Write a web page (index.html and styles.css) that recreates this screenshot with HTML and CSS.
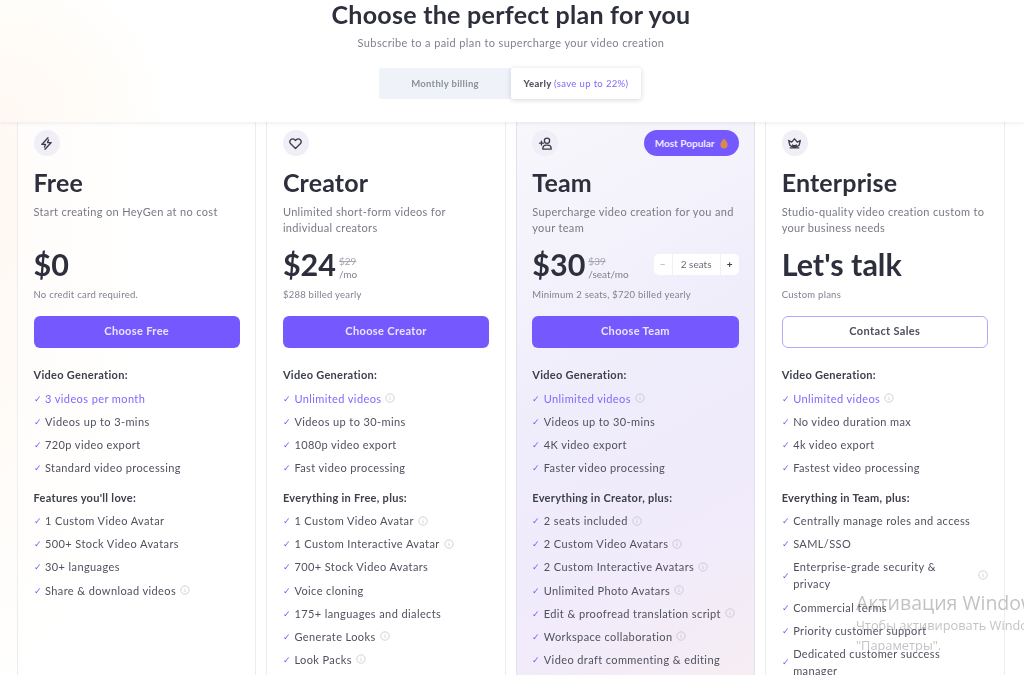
FILE: index.html
```html
<!DOCTYPE html>
<html lang="en">
<head>
<meta charset="utf-8">
<title>Choose the perfect plan</title>
<link rel="stylesheet" href="styles.css">
</head>
<body>
<svg class="defs" aria-hidden="true"><symbol id="info" viewBox="0 0 12 12"><circle cx="6" cy="6" r="5" fill="none" stroke="currentColor" stroke-width=".8"/><path d="M6 5.4v3M6 3.4v.9" fill="none" stroke="currentColor" stroke-width=".8"/></symbol></svg>
<header class="top">
  <h1 class="headline">Choose the perfect plan for you</h1>
  <p class="sub">Subscribe to a paid plan to supercharge your video creation</p>
  <div class="toggle">
    <div class="opt">Monthly billing</div>
    <div class="opt active"><b>Yearly</b>&nbsp;<span class="save">(save up to 22%)</span></div>
  </div>
</header>
<main class="plans">
  <section class="card">
    <div class="head"><span class="ico"><svg viewBox="0 0 16 16"><path d="M9.6 1.8 3 9h4l-1.2 2.8M6.4 14.2 13 7H9l1.2-2.8" /></svg></span></div>
    <h2 class="name">Free</h2>
    <p class="desc">Start creating on HeyGen at no cost</p>
    <div class="price"><span class="amount">$0</span></div>
    <p class="note">No credit card required.</p>
    <a class="btn">Choose Free</a>
    <h3 class="group">Video Generation:</h3>
    <ul class="list">
      <li class="hl"><i>✓</i><span>3 videos per month</span></li>
      <li><i>✓</i><span>Videos up to 3-mins</span></li>
      <li><i>✓</i><span>720p video export</span></li>
      <li><i>✓</i><span>Standard video processing</span></li>
    </ul>
    <h3 class="group next">Features you'll love:</h3>
    <ul class="list">
      <li><i>✓</i><span>1 Custom Video Avatar</span></li>
      <li><i>✓</i><span>500+ Stock Video Avatars</span></li>
      <li><i>✓</i><span>30+ languages</span></li>
      <li><i>✓</i><span>Share &amp; download videos</span><svg class="inf"><use href="#info"/></svg></li>
    </ul>
  </section>

  <section class="card">
    <div class="head"><span class="ico"><svg viewBox="0 0 16 16"><path d="M8 13.4 2.9 8.3a3.1 3.1 0 0 1 0-4.3 3 3 0 0 1 4.3 0l.8.8.8-.8a3 3 0 0 1 4.3 0 3.1 3.1 0 0 1 0 4.3z"/></svg></span></div>
    <h2 class="name">Creator</h2>
    <p class="desc">Unlimited short-form videos for individual creators</p>
    <div class="price"><span class="amount">$24</span><span class="per"><s>$29</s><span>/mo</span></span></div>
    <p class="note">$288 billed yearly</p>
    <a class="btn">Choose Creator</a>
    <h3 class="group">Video Generation:</h3>
    <ul class="list">
      <li class="hl"><i>✓</i><span>Unlimited videos</span><svg class="inf"><use href="#info"/></svg></li>
      <li><i>✓</i><span>Videos up to 30-mins</span></li>
      <li><i>✓</i><span>1080p video export</span></li>
      <li><i>✓</i><span>Fast video processing</span></li>
    </ul>
    <h3 class="group next">Everything in Free, plus:</h3>
    <ul class="list">
      <li><i>✓</i><span>1 Custom Video Avatar</span><svg class="inf"><use href="#info"/></svg></li>
      <li><i>✓</i><span>1 Custom Interactive Avatar</span><svg class="inf"><use href="#info"/></svg></li>
      <li><i>✓</i><span>700+ Stock Video Avatars</span></li>
      <li><i>✓</i><span>Voice cloning</span></li>
      <li><i>✓</i><span>175+ languages and dialects</span></li>
      <li><i>✓</i><span>Generate Looks</span><svg class="inf"><use href="#info"/></svg></li>
      <li><i>✓</i><span>Look Packs</span><svg class="inf"><use href="#info"/></svg></li>
    </ul>
  </section>

  <section class="card team">
    <div class="head">
      <span class="ico"><svg viewBox="0 0 16 16"><circle cx="9.6" cy="5" r="2.8"/><path d="M5.2 14v-1a3.4 3.4 0 0 1 3.4-3.2h2a3.4 3.4 0 0 1 3.4 3.2v1zM1.6 7.6h4.2M3.7 5.5v4.2"/></svg></span>
      <span class="badge">Most Popular <svg class="flame" viewBox="0 0 8 11"><path d="M4 .5C6 2.4 7.6 4.6 7.6 6.8A3.6 3.6 0 0 1 .4 6.8C.4 4.6 2 2.4 4 .5z"/></svg></span>
    </div>
    <h2 class="name">Team</h2>
    <p class="desc">Supercharge video creation for you and your team</p>
    <div class="price"><span class="amount">$30</span><span class="per"><s>$39</s><span>/seat/mo</span></span>
      <div class="seats"><span class="minus">−</span><span class="count">2 seats</span><span class="plus">+</span></div>
    </div>
    <p class="note">Minimum 2 seats, $720 billed yearly</p>
    <a class="btn">Choose Team</a>
    <h3 class="group">Video Generation:</h3>
    <ul class="list">
      <li class="hl"><i>✓</i><span>Unlimited videos</span><svg class="inf"><use href="#info"/></svg></li>
      <li><i>✓</i><span>Videos up to 30-mins</span></li>
      <li><i>✓</i><span>4K video export</span></li>
      <li><i>✓</i><span>Faster video processing</span></li>
    </ul>
    <h3 class="group next">Everything in Creator, plus:</h3>
    <ul class="list">
      <li><i>✓</i><span>2 seats included</span><svg class="inf"><use href="#info"/></svg></li>
      <li><i>✓</i><span>2 Custom Video Avatars</span><svg class="inf"><use href="#info"/></svg></li>
      <li><i>✓</i><span>2 Custom Interactive Avatars</span><svg class="inf"><use href="#info"/></svg></li>
      <li><i>✓</i><span>Unlimited Photo Avatars</span><svg class="inf"><use href="#info"/></svg></li>
      <li><i>✓</i><span>Edit &amp; proofread translation script</span><svg class="inf"><use href="#info"/></svg></li>
      <li><i>✓</i><span>Workspace collaboration</span><svg class="inf"><use href="#info"/></svg></li>
      <li><i>✓</i><span>Video draft commenting &amp; editing</span></li>
    </ul>
  </section>

  <section class="card">
    <div class="head"><span class="ico"><svg viewBox="0 0 16 16"><path d="M3.4 12.6h9.2M3 9.8 1.8 4.8 5 6.6 8 3l3 3.6 3.2-1.8L13 9.8a5.6 2.8 0 0 1-10 0zM6 9.6c1 .8 3 .8 4 0"/></svg></span></div>
    <h2 class="name">Enterprise</h2>
    <p class="desc">Studio-quality video creation custom to your business needs</p>
    <div class="price"><span class="amount">Let's talk</span></div>
    <p class="note">Custom plans</p>
    <a class="btn ghost">Contact Sales</a>
    <h3 class="group">Video Generation:</h3>
    <ul class="list">
      <li class="hl"><i>✓</i><span>Unlimited videos</span><svg class="inf"><use href="#info"/></svg></li>
      <li><i>✓</i><span>No video duration max</span></li>
      <li><i>✓</i><span>4k video export</span></li>
      <li><i>✓</i><span>Fastest video processing</span></li>
    </ul>
    <h3 class="group next">Everything in Team, plus:</h3>
    <ul class="list">
      <li><i>✓</i><span>Centrally manage roles and access</span></li>
      <li><i>✓</i><span>SAML/SSO</span></li>
      <li><i>✓</i><span class="wide">Enterprise-grade security &amp;<br>privacy</span><svg class="inf"><use href="#info"/></svg></li>
      <li><i>✓</i><span>Commercial terms</span></li>
      <li><i>✓</i><span>Priority customer support</span></li>
      <li><i>✓</i><span class="wide">Dedicated customer success<br>manager</span></li>
    </ul>
  </section>
</main>
<aside class="watermark">
  <div class="wm-title">Активация Windows</div>
  <div class="wm-text">Чтобы активировать Windows, перейдите в раздел<br>"Параметры".</div>
</aside>
</body>
</html>
```

FILE: styles.css
```css
* { box-sizing: border-box; }
html, body { margin: 0; height: 675px; overflow: hidden; }
body {
  position: relative;
  font-family: "Lato", "Open Sans", sans-serif;
  color: #4c4e5b;
  background: radial-gradient(ellipse 150px 520px at 0 200px, #fff8f2 0%, #fffdfb 70%, #fff 100%);
  filter: blur(.3px);
}
.defs { position: absolute; width: 0; height: 0; }

.top {
  position: relative;
  z-index: 2;
  height: 122px;
  display: flex;
  flex-direction: column;
  align-items: center;
  padding-right: 2px;
  background: radial-gradient(ellipse 170px 170px at 0 120px, #fff8f2 0%, #fffdfa 70%, #fff 100%);
  box-shadow: 0 1px 4px rgba(40, 40, 70, .09);
}
.headline {
  margin: 0;
  height: 30px;
  line-height: 29px;
  font-size: 25px;
  font-weight: 700;
  color: #2d2f3c;
  letter-spacing: .27px;
}
.sub {
  margin: 6px 0 0;
  font-size: 11px;
  line-height: 14px;
  color: #7f828e;
  letter-spacing: .38px;
}
.toggle {
  display: flex;
  width: 262px;
  height: 31px;
  margin: 17.5px 2px 0 0;
  border-radius: 2px;
  background: #eff2f9;
  font-size: 9.5px;
}
.opt {
  flex: 1;
  display: flex;
  align-items: center;
  justify-content: center;
  font-weight: 700;
  color: #8c909c;
  letter-spacing: .3px;
}
.opt.active {
  flex: 0 0 130px;
  background: #fff;
  border-radius: 2px;
  color: #555764;
  box-shadow: 0 1px 5px rgba(50, 50, 90, .2);
}
.save { color: #8067ff; font-weight: 400; letter-spacing: .35px; }

.plans {
  display: grid;
  grid-template-columns: repeat(4, 1fr);
  column-gap: 10px;
  padding: 0 19.5px 0 17px;
}
.card {
  height: 620px;
  padding: 8px 15.5px 0;
  border: 1px solid #ecedf1;
  border-top: 0;
  background: rgba(255, 255, 255, .55);
}
.team {
  border-color: #e3e1ef;
  background: linear-gradient(150deg, #f8f7fb 0%, #efecfb 45%, #f1ebfb 70%, #f8efef 100%);
}
.head {
  height: 26px;
  display: flex;
  justify-content: space-between;
  align-items: center;
}
.ico {
  width: 26px;
  height: 26px;
  border-radius: 50%;
  background: #f0eef6;
  display: flex;
  align-items: center;
  justify-content: center;
}
.ico svg {
  width: 15px;
  height: 15px;
  fill: none;
  stroke: #393b48;
  stroke-width: 1.4;
  stroke-linejoin: round;
  stroke-linecap: round;
}
.badge {
  width: 95px;
  height: 26px;
  border-radius: 13px;
  background: #7559ff;
  color: #efeaff;
  font-size: 10px;
  font-weight: 700;
  display: flex;
  align-items: center;
  justify-content: center;
  gap: 5px;
}
.flame { width: 8px; height: 11px; fill: #d98a4e; }
.name {
  margin: 11px 0 0;
  height: 30px;
  line-height: 30px;
  font-size: 25px;
  font-weight: 700;
  color: #2d2f3c;
  letter-spacing: .15px;
}
.desc {
  margin: 7px 0 0;
  height: 32px;
  font-size: 11px;
  line-height: 16px;
  color: #777a86;
  letter-spacing: .34px;
}
.price {
  margin-top: 11px;
  height: 34px;
  display: flex;
  align-items: center;
}
.amount {
  font-size: 30.5px;
  line-height: 34px;
  font-weight: 700;
  color: #2d2f3c;
}
.per {
  margin: 8px 0 0 3px;
  display: flex;
  flex-direction: column;
  font-size: 10px;
  line-height: 13px;
  color: #7f828e;
}
.per s { color: #a3a6b0; }
.seats {
  margin-left: auto;
  width: 85px;
  height: 21px;
  display: flex;
  border-radius: 5px;
  background: #fff;
  font-size: 10px;
  line-height: 21px;
  text-align: center;
  color: #6a6c78;
}
.minus { flex: 0 0 19px; color: #a9abb5; border-right: 1px solid #f1f0f6; }
.count { flex: 1; }
.plus { flex: 0 0 19px; color: #3e404c; font-weight: 700; border-left: 1px solid #f1f0f6; }
.note {
  margin: 7px 0 0;
  font-size: 9.5px;
  line-height: 14px;
  color: #7f828e;
  letter-spacing: .25px;
}
.btn {
  display: flex;
  align-items: center;
  justify-content: center;
  height: 31.5px;
  margin-top: 14px;
  padding-bottom: 2px;
  border-radius: 6px;
  background: #7559ff;
  color: #e9e5ff;
  font-size: 11px;
  font-weight: 700;
  letter-spacing: .35px;
}
.ghost {
  background: #fff;
  border: 1.5px solid #b5a7fb;
  color: #4c4e5b;
}
.group {
  margin: 19.5px 0 0;
  font-size: 11px;
  line-height: 16px;
  font-weight: 700;
  color: #3e404c;
  letter-spacing: .3px;
}
.group.next { margin-top: 14px; }
.list {
  list-style: none;
  margin: 6.5px 0 0;
  padding: 0;
  display: flex;
  flex-direction: column;
  gap: 6.1px;
}
.list li {
  display: flex;
  align-items: center;
  font-size: 11px;
  line-height: 17px;
  letter-spacing: .4px;
  color: #4f515e;
}
.list i {
  flex: 0 0 11.5px;
  font-style: normal;
  font-size: 9px;
  color: #7559ff;
}
.wide { flex: 1; }
.hl span { color: #8067ff; }
.inf {
  flex: 0 0 10px;
  width: 10px;
  height: 10px;
  margin-left: 4px;
  color: #b9bbc4;
}
.watermark {
  position: absolute;
  z-index: 3;
  left: 856px;
  top: 590px;
  white-space: nowrap;
  font-family: "Open Sans", sans-serif;
  color: rgba(110, 110, 110, .42);
}
.wm-title { font-size: 19.5px; line-height: 26px; }
.wm-text { margin-top: -1px; font-size: 12.8px; line-height: 20px; }
```
